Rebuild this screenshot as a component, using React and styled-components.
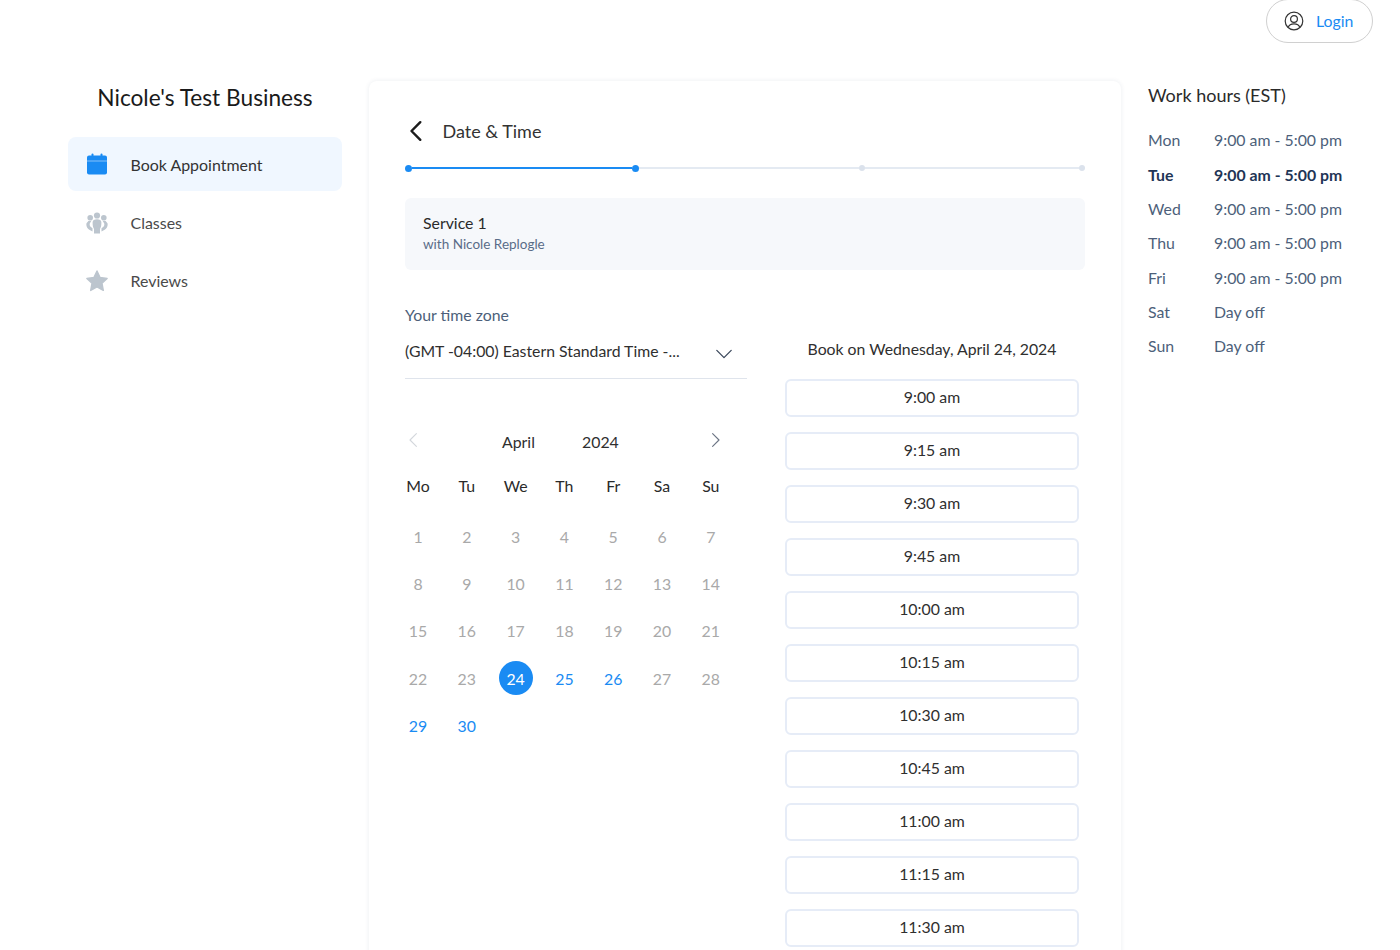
import React from 'react'
import styled, { createGlobalStyle } from 'styled-components'

const GlobalStyle = createGlobalStyle`
	html, body {
		margin: 0;
		padding: 0;
		background: #fff;
		font-family: Lato, "Open Sans", sans-serif;
		color: #222;
	}
`

const hours = [
	['Mon', '9:00 am - 5:00 pm'],
	['Tue', '9:00 am - 5:00 pm', true],
	['Wed', '9:00 am - 5:00 pm'],
	['Thu', '9:00 am - 5:00 pm'],
	['Fri', '9:00 am - 5:00 pm'],
	['Sat', 'Day off'],
	['Sun', 'Day off'],
]
const weekDays = ['Mo', 'Tu', 'We', 'Th', 'Fr', 'Sa', 'Su']
const slots = ['9:00 am', '9:15 am', '9:30 am', '9:45 am', '10:00 am', '10:15 am', '10:30 am', '10:45 am', '11:00 am', '11:15 am', '11:30 am']
const openDays = [25, 26, 29, 30]

const CalendarIcon = () => (
	<svg width="22" height="22" viewBox="0 0 22 22" fill="#1a8bf3">
		<rect x="5.500" y="0.500" width="2" height="4" rx="1" />
		<rect x="14.500" y="0.500" width="2" height="4" rx="1" />
		<path d="M3 2.500h16a2 2 0 0 1 2 2V7.700H1V4.500a2 2 0 0 1 2-2z" />
		<path d="M1 8.300h20V19.500a2 2 0 0 1-2 2H3a2 2 0 0 1-2-2z" />
	</svg>
)

const ClassesIcon = () => (
	<svg width="22" height="22" viewBox="0 0 22 22" fill="#bcc5ce">
		<circle cx="11" cy="3.500" r="3.100" />
		<circle cx="4.200" cy="5.800" r="2.800" />
		<circle cx="17.800" cy="5.800" r="2.800" />
		<path d="M6.600 10.500C6.600 8.200 8.400 7.200 11 7.200s4.400 1 4.400 3.300c0 3-.5 5.200-1.400 6.500V21.500H8V17C7.100 15.700 6.600 13.500 6.600 10.500z" />
		<path d="M2.400 9 .5 11.200c-.6 2.600.5 5.300 2.800 6.500L6.500 19.500v-3.300l-2.200-1.600c-.7-1-.8-2.400-.4-3.400L5.300 9z" />
		<path d="M19.600 9 21.500 11.200c.6 2.600-.5 5.300-2.800 6.500L15.500 19.500v-3.300l2.200-1.600c.7-1 .8-2.400.4-3.400L16.700 9z" />
	</svg>
)

const StarIcon = () => (
	<svg width="22" height="22" viewBox="0 0 22 22" fill="#bcc5ce" stroke="#bcc5ce" strokeWidth="1.400" strokeLinejoin="round">
		<path d="M11 1 14.100 7.500l7 .9-5.100 4.900 1.300 7.100L11 17l-6.300 3.400 1.300-7.100L.9 8.400l7-.9z" />
	</svg>
)

const UserIcon = () => (
	<svg width="20" height="20" viewBox="0 0 20 20" fill="none" stroke="#333" strokeWidth="1.200">
		<circle cx="10" cy="10" r="8.800" />
		<circle cx="10" cy="8" r="3.400" />
		<path d="M4.200 16.200c.8-2.400 3-3.400 5.800-3.400s5 1 5.800 3.400" />
	</svg>
)

const Chevron = ({ direction, color, size, width }) => (
	<svg width={size} height={size} viewBox="0 0 20 20" fill="none" stroke={color} strokeWidth={width} strokeLinecap="round" strokeLinejoin="round">
		{direction === 'left' && <path d="M13 2 5 10l8 8" />}
		{direction === 'right' && <path d="M7 2l8 8-8 8" />}
		{direction === 'down' && <path d="M2 6l8 8 8-8" />}
	</svg>
)

const App = () => (
	<Page>
		<GlobalStyle />
		<TopBar>
			<LoginButton>
				<UserIcon />
				<span>Login</span>
			</LoginButton>
		</TopBar>
		<Columns>
			<Sidebar>
				<BusinessName>Nicole's Test Business</BusinessName>
				<Menu>
					<MenuItem $active><CalendarIcon /><span>Book Appointment</span></MenuItem>
					<MenuItem><ClassesIcon /><span>Classes</span></MenuItem>
					<MenuItem><StarIcon /><span>Reviews</span></MenuItem>
				</Menu>
			</Sidebar>
			<Card>
				<CardHeader>
					<Chevron direction="left" color="#1c1c1c" size={22} width={2.2} />
					<CardTitle>Date &amp; Time</CardTitle>
				</CardHeader>
				<Progress>
					<Dot $on />
					<Segment $on $grow={226} />
					<Dot $on />
					<Segment $grow={226} />
					<Dot />
					<Segment $grow={220} />
					<Dot />
				</Progress>
				<ServiceBox>
					<ServiceName>Service 1</ServiceName>
					<ServiceStaff>with Nicole Replogle</ServiceStaff>
				</ServiceBox>
				<Booking>
					<LeftColumn>
						<ZoneLabel>Your time zone</ZoneLabel>
						<ZoneSelect>
							<span>(GMT -04:00) Eastern Standard Time -...</span>
							<Chevron direction="down" color="#39465a" size={18} width={1.4} />
						</ZoneSelect>
						<MonthBar>
							<Chevron direction="left" color="#d3d7dc" size={16} width={1.4} />
							<MonthName>April</MonthName>
							<YearName>2024</YearName>
							<Chevron direction="right" color="#6b7484" size={16} width={1.4} />
						</MonthBar>
						<CalendarGrid>
							{weekDays.map((d) => <WeekDay key={d}>{d}</WeekDay>)}
							{Array.from({ length: 30 }, (_, i) => i + 1).map((d) => (
								<DayCell key={d} $selected={d === 24} $open={openDays.includes(d)}>{d}</DayCell>
							))}
						</CalendarGrid>
					</LeftColumn>
					<RightColumn>
						<BookTitle>Book on Wednesday, April 24, 2024</BookTitle>
						<SlotList>
							{slots.map((s) => <Slot key={s}>{s}</Slot>)}
						</SlotList>
					</RightColumn>
				</Booking>
			</Card>
			<Hours>
				<HoursTitle>Work hours (EST)</HoursTitle>
				<HoursTable>
					{hours.map(([day, time, today]) => (
						<HoursRow key={day} $today={today}>
							<span>{day}</span>
							<span>{time}</span>
						</HoursRow>
					))}
				</HoursTable>
			</Hours>
		</Columns>
	</Page>
)
export default App

const Page = styled.div`
	width: 1400px;
	height: 950px;
	overflow: hidden;
`
const TopBar = styled.div`
	height: 81px;
	display: flex;
	justify-content: flex-end;
	align-items: flex-start;
	padding-right: 27px;
`
const LoginButton = styled.div`
	width: 107.500px;
	height: 44px;
	margin-top: -1px;
	box-sizing: border-box;
	border: 1.500px solid #d0d0d0;
	border-radius: 23px;
	display: flex;
	align-items: center;
	padding: 0 0 1px 17.500px;
	gap: 12px;
	font-size: 15.850px;
	color: #1a8bf3;
`
const Columns = styled.div`
	display: flex;
	align-items: flex-start;
	padding-left: 68px;
`
const Sidebar = styled.div`
	width: 274px;
	flex-shrink: 0;
`
const BusinessName = styled.div`
	font-size: 22.700px;
	line-height: 33px;
	text-align: center;
	color: #1a1a1a;
`
const Menu = styled.div`
	margin-top: 23px;
	display: flex;
	flex-direction: column;
	gap: 4px;
`
const MenuItem = styled.div`
	height: 54.400px;
	border-radius: 8px;
	display: flex;
	align-items: center;
	padding-left: 18px;
	gap: 22.500px;
	font-size: 15.950px;
	color: ${(p) => (p.$active ? '#333' : '#4a4a4a')};
	background: ${(p) => (p.$active ? '#f0f7ff' : 'transparent')};
`
const Card = styled.div`
	width: 680px;
	height: 900px;
	margin-left: 27px;
	padding: 36px 36px 0;
	flex-shrink: 0;
	border-radius: 8px;
	box-shadow: 0 0 5px rgba(30, 50, 90, 0.09);
`
const CardHeader = styled.div`
	display: flex;
	align-items: center;
	gap: 14.500px;
	height: 28px;
	padding-left: 1px;
`
const CardTitle = styled.div`
	font-size: 18px;
	color: #333;
`
const Progress = styled.div`
	margin-top: 19px;
	width: 680px;
	display: flex;
	align-items: center;
	height: 8px;
`
const Dot = styled.div`
	width: ${(p) => (p.$on ? '7px' : '6px')};
	height: ${(p) => (p.$on ? '7px' : '6px')};
	border-radius: 50%;
	flex-shrink: 0;
	background: ${(p) => (p.$on ? '#1a8bf3' : '#dbe2ec')};
`
const Segment = styled.div`
	flex-grow: ${(p) => p.$grow};
	height: 2px;
	background: ${(p) => (p.$on ? '#1a8bf3' : '#e4eaf2')};
`
const ServiceBox = styled.div`
	margin-top: 26px;
	height: 72px;
	box-sizing: border-box;
	padding: 14px 18px 0;
	background: #f6f8fb;
	border-radius: 6px;
`
const ServiceName = styled.div`
	font-size: 15.850px;
	line-height: 22px;
	color: #2a2a2a;
`
const ServiceStaff = styled.div`
	font-size: 13.500px;
	line-height: 20px;
	color: #5a6c88;
`
const Booking = styled.div`
	display: flex;
	gap: 38px;
	margin-top: 36px;
`
const LeftColumn = styled.div`
	width: 342px;
`
const ZoneLabel = styled.div`
	font-size: 15.850px;
	line-height: 20px;
	margin-top: -1px;
	color: #4d5f7a;
`
const ZoneSelect = styled.div`
	margin-top: 11px;
	height: 43px;
	box-sizing: border-box;
	border-bottom: 1.500px solid #dfe4ec;
	display: flex;
	justify-content: space-between;
	align-items: flex-start;
	padding: 5px 14px 0 0;
	font-size: 15.800px;
	line-height: 20px;
	color: #2f2f2f;
	svg {
		margin-top: 4px;
	}
`
const MonthBar = styled.div`
	margin-top: 50px;
	height: 24px;
	display: flex;
	align-items: center;
	width: 328px;
	padding-left: 1px;
	svg {
		margin-top: -3px;
	}
	svg:first-child {
		margin-right: 80px;
	}
`
const MonthName = styled.div`
	font-size: 15.850px;
	color: #2f2f2f;
	width: 80px;
`
const YearName = styled.div`
	font-size: 15.850px;
	color: #2f2f2f;
	width: 125px;
`
const CalendarGrid = styled.div`
	margin: 13px 0 0 -4px;
	display: grid;
	grid-template-columns: repeat(7, 34px);
	column-gap: 14.800px;
	grid-auto-rows: 47.150px;
	justify-items: center;
	align-items: center;
`
const WeekDay = styled.div`
	font-size: 15.850px;
	color: #2a2a2a;
	height: 28px;
	line-height: 20px;
`
const DayCell = styled.div`
	width: 34px;
	height: 34px;
	border-radius: 50%;
	display: flex;
	align-items: center;
	justify-content: center;
	font-size: 15.850px;
	color: ${(p) => (p.$selected ? '#fff' : p.$open ? '#1a8bf3' : '#a9a9a9')};
	background: ${(p) => (p.$selected ? '#1a8bf3' : 'transparent')};
`
const RightColumn = styled.div`
	width: 294px;
`
const BookTitle = styled.div`
	font-size: 15.800px;
	line-height: 20px;
	margin-top: 33px;
	text-align: center;
	color: #2f2f2f;
`
const SlotList = styled.div`
	margin-top: 20px;
	display: flex;
	flex-direction: column;
	gap: 15px;
`
const Slot = styled.div`
	height: 38px;
	box-sizing: border-box;
	border: 2px solid #e6ecf7;
	border-radius: 6px;
	padding-bottom: 2.500px;
	display: flex;
	align-items: center;
	justify-content: center;
	font-size: 15.850px;
	color: #2f2f2f;
`
const Hours = styled.div`
	margin-left: 27px;
	width: 220px;
`
const HoursTitle = styled.div`
	font-size: 18px;
	line-height: 28px;
	color: #2a2a2a;
`
const HoursTable = styled.div`
	margin-top: 13.600px;
`
const HoursRow = styled.div`
	display: grid;
	grid-template-columns: 66px 1fr;
	height: 34.330px;
	align-items: center;
	font-size: 15.850px;
	font-weight: ${(p) => (p.$today ? 700 : 400)};
	color: ${(p) => (p.$today ? '#1f3556' : '#4d5f7a')};
`
